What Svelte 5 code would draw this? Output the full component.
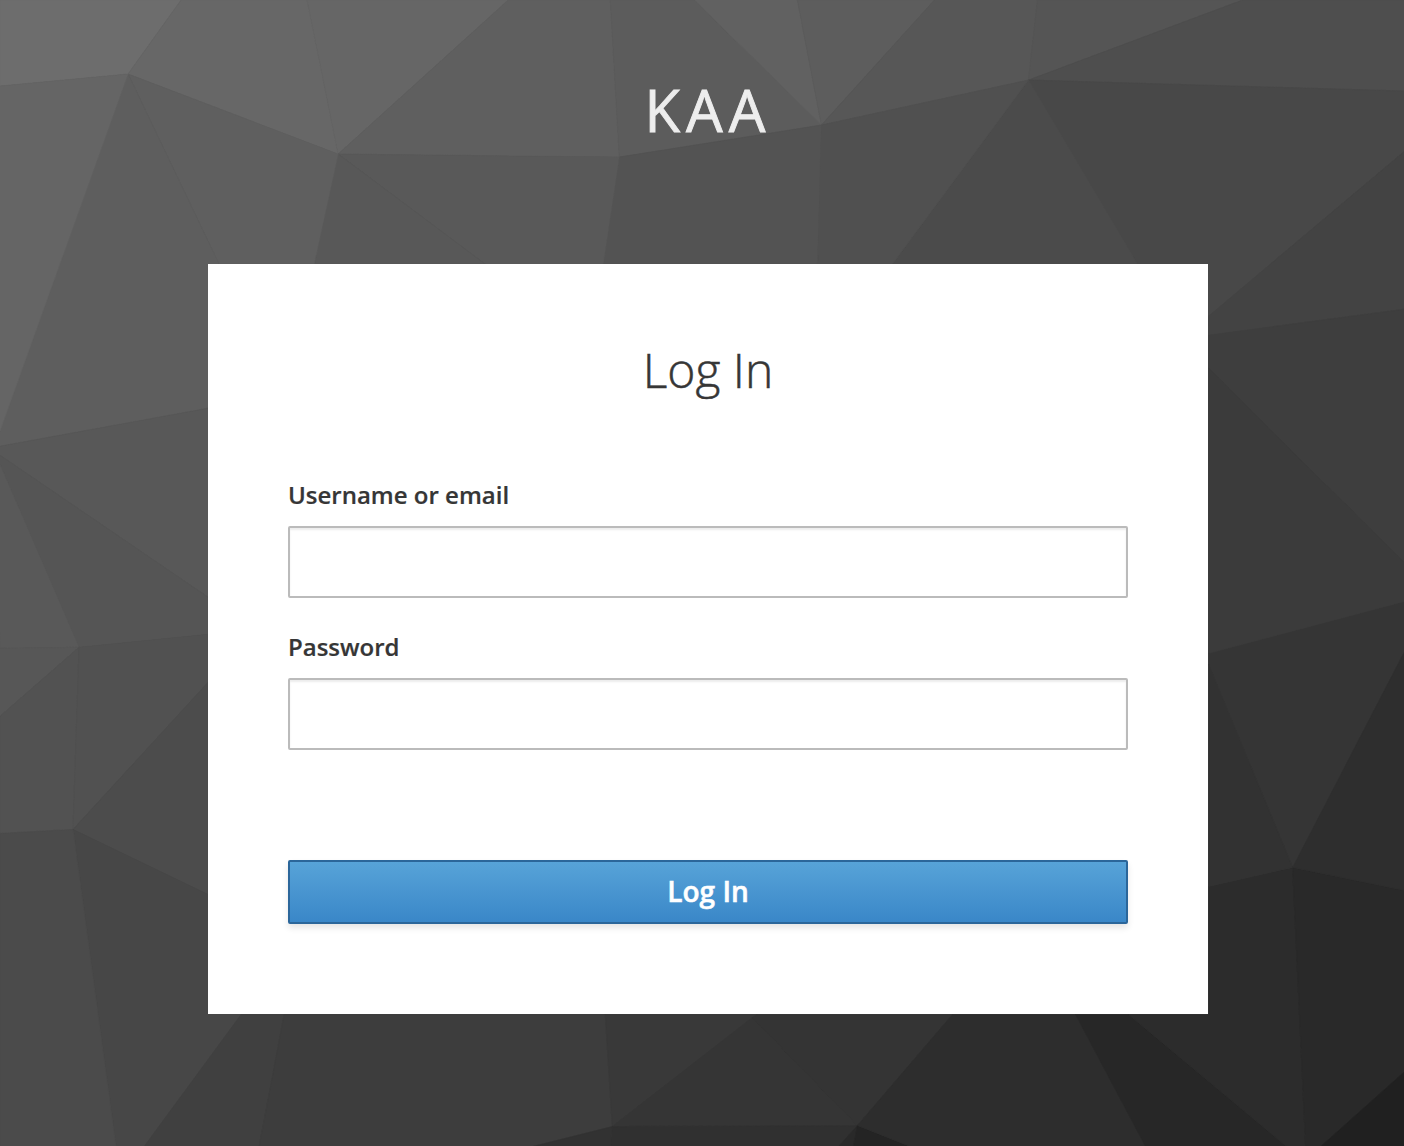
<script>
  // Background facets: fill colour followed by polygon vertices.
  const facets = [
    ['#6d6d6d', '0,0 181,0 128,74 0,86'],
    ['#676767', '181,0 307,0 338,154 128,74'],
    ['#666666', '307,0 508,0 338,154'],
    ['#5f5f5f', '508,0 610,0 619,157 338,154'],
    ['#5c5c5c', '610,0 694,0 821,125 619,157'],
    ['#616161', '694,0 797,0 821,125'],
    ['#5d5d5d', '797,0 934,0 821,125'],
    ['#575757', '934,0 1037,0 1028,80 821,125'],
    ['#555555', '1037,0 1242,0 1028,80'],
    ['#4e4e4e', '1242,0 1404,0 1404,91 1028,80'],
    ['#484848', '1028,80 1404,91 1404,151 1208,316 1137,264'],
    ['#4b4b4b', '1028,80 1137,264 892,264'],
    ['#505050', '821,125 1028,80 892,264 817,264'],
    ['#535353', '619,157 821,125 817,264 603,264'],
    ['#595959', '338,154 619,157 603,264 485,264'],
    ['#585858', '338,154 485,264 314,264'],
    ['#5f5f5f', '128,74 338,154 314,264 219,264'],
    ['#5e5e5e', '128,74 219,264 208,408 0,446 -6,447'],
    ['#656565', '0,86 128,74 0,431'],
    ['#585858', '-6,447 0,446 208,408 208,597 0,455'],
    ['#555555', '-6,450 0,455 208,597 208,634 79,647'],
    ['#595959', '-6,450 79,647 0,648'],
    ['#575757', '0,648 79,647 0,716'],
    ['#525252', '0,716 79,647 73,829 0,833'],
    ['#515151', '79,647 208,634 208,682 73,829'],
    ['#4c4c4c', '73,829 208,682 208,894'],
    ['#474747', '73,829 208,894 241,1014 144,1146 116,1146'],
    ['#4b4b4b', '0,833 73,829 116,1146 0,1146'],
    ['#404040', '241,1014 284,1014 259,1146 144,1146'],
    ['#3d3d3d', '284,1014 605,1014 612,1126 532,1146 259,1146'],
    ['#393939', '605,1014 757,1014 612,1126'],
    ['#353535', '612,1126 752,1017 857,1125'],
    ['#343434', '757,1014 952,1014 857,1125 752,1017'],
    ['#303030', '612,1126 857,1125 838,1146 610,1146'],
    ['#323232', '612,1126 610,1146 532,1146'],
    ['#292929', '857,1125 853,1146 838,1146'],
    ['#242424', '857,1125 910,1146 853,1146'],
    ['#2d2d2d', '857,1125 952,1014 1075,1014 1145,1146 910,1146'],
    ['#272727', '1075,1014 1128,1014 1286,1146 1145,1146'],
    ['#2c2c2c', '1128,1014 1208,1014 1208,886 1292,867 1305,1146 1286,1146'],
    ['#292929', '1292,867 1404,890 1404,1071 1320,1146 1305,1146'],
    ['#202020', '1404,1071 1404,1146 1320,1146'],
    ['#353535', '1208,653 1404,601 1404,651 1292,867 1208,664'],
    ['#323232', '1208,664 1292,867 1208,886'],
    ['#2e2e2e', '1404,651 1404,890 1292,867'],
    ['#434343', '1208,316 1404,151 1404,309 1208,335'],
    ['#3e3e3e', '1208,335 1404,309 1404,563 1208,368'],
    ['#3b3b3b', '1208,368 1404,563 1404,601 1208,653']
  ];
</script>

<div class="page">
  <svg class="backdrop" viewBox="0 0 1403.3 1145.4" aria-hidden="true">
    {#each facets as [fill, points]}
      <polygon {points} {fill} stroke={fill} />
    {/each}
  </svg>
  <div class="content">
    <header>KAA</header>
    <main>
      <h1>Log In</h1>
      <form onsubmit={(e) => e.preventDefault()}>
        <label for="username">Username or email</label>
        <input id="username" type="text" />
        <label for="password">Password</label>
        <input id="password" type="password" />
        <button type="submit">Log In</button>
      </form>
    </main>
  </div>
</div>

<style>
  :global(body) {
    margin: 0;
    overflow: hidden;
  }
  .page {
    position: relative;
    width: 1404px;
    height: 1146px;
    overflow: hidden;
    background: #444;
    font-family: 'Open Sans', sans-serif;
    color: #363636;
  }
  .backdrop {
    position: absolute;
    inset: 0;
    width: 1404px;
    height: 1146px;
  }
  .backdrop polygon {
    stroke-width: 0.6;
  }
  .content {
    position: relative;
    display: flex;
    flex-direction: column;
    align-items: center;
    width: 1416px;
  }
  header {
    box-sizing: border-box;
    height: 264px;
    padding-top: 75px;
    font-size: 58px;
    line-height: 70px;
    letter-spacing: 6px;
    color: #ededed;
    -webkit-text-stroke: 0.9px #ededed;
  }
  main {
    box-sizing: border-box;
    width: 1000px;
    height: 750px;
    padding: 74px 80px 0;
    background: #fff;
  }
  h1 {
    margin: 0 0 73px;
    font-size: 48px;
    font-weight: 300;
    line-height: 64px;
    text-align: center;
    -webkit-text-stroke: 0.5px #363636;
  }
  form {
    display: flex;
    flex-direction: column;
  }
  label {
    margin-bottom: 11px;
    font-size: 24px;
    font-weight: 600;
    line-height: 40px;
    -webkit-text-stroke: 0.2px #363636;
  }
  input {
    box-sizing: border-box;
    height: 72px;
    margin: 0 0 29px;
    padding: 4px 20px;
    border: 2px solid #bbb;
    border-radius: 2px;
    outline: none;
    background: #fff;
    box-shadow: inset 0 2px 2px rgba(3, 3, 3, 0.075);
    font: 28px 'Open Sans', sans-serif;
  }
  button {
    box-sizing: border-box;
    height: 64px;
    margin-top: 81px;
    padding: 0 0 2px;
    border: 2px solid #2b669a;
    border-radius: 2px;
    background: linear-gradient(to bottom, #57a3d8 0%, #3a87c8 100%);
    box-shadow: 0 4px 6px rgba(3, 3, 3, 0.1);
    color: #fff;
    font: 600 28px/58px 'Open Sans', sans-serif;
    -webkit-text-stroke: 0.5px #fff;
  }
</style>
